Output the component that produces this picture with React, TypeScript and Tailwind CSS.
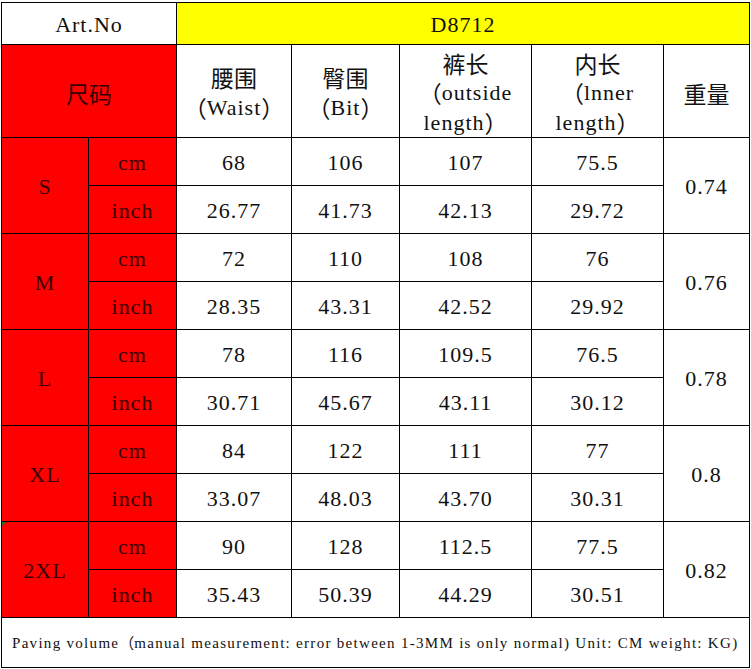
const sizes = [
  { size: "S", cm: ["68", "106", "107", "75.5"], inch: ["26.77", "41.73", "42.13", "29.72"], weight: "0.74" },
  { size: "M", cm: ["72", "110", "108", "76"], inch: ["28.35", "43.31", "42.52", "29.92"], weight: "0.76" },
  { size: "L", cm: ["78", "116", "109.5", "76.5"], inch: ["30.71", "45.67", "43.11", "30.12"], weight: "0.78" },
  { size: "XL", cm: ["84", "122", "111", "77"], inch: ["33.07", "48.03", "43.70", "30.31"], weight: "0.8" },
  { size: "2XL", cm: ["90", "128", "112.5", "77.5"], inch: ["35.43", "50.39", "44.29", "30.51"], weight: "0.82" },
]

function Cjk({ children }: { children: React.ReactNode }) {
  return <span className="font-['Noto_Sans_CJK_SC',sans-serif] text-[23px] tracking-normal">{children}</span>
}

// one line of a header cell, fixed height so mixed fonts don't push it around
function Line({ children }: { children: React.ReactNode }) {
  return <div className="flex h-[31px] items-center justify-center whitespace-nowrap">{children}</div>
}

const cell = "flex items-center justify-center text-center pt-[3px]"
const white = `${cell} bg-white text-[#111]`
const red = `${cell} bg-[#ff0000] text-[#3a0000]`

export default function App() {
  return (
    <div className="min-h-screen bg-white pt-[2px] pl-[1px] font-['Liberation_Serif','Noto_Sans_CJK_SC',serif] text-[22px] leading-[30px] tracking-[1px] [text-spacing-trim:space-all]">
      <div className="grid w-fit grid-cols-[86px_87px_114px_107px_131px_131px_85px] grid-rows-[41px_92px_repeat(10,47px)_49px] gap-px bg-black p-px">
        <div className={`${white} col-span-2`}>Art.No</div>
        <div className={`${cell} col-span-5 bg-[#ffff00] text-[#111]`}>D8712</div>

        <div className={`${red} col-span-2`}>
          <Cjk>尺码</Cjk>
        </div>
        <div className={`${white} flex-col`}>
          <Line><Cjk>腰围</Cjk></Line>
          <Line><Cjk>（</Cjk>Waist<Cjk>）</Cjk></Line>
        </div>
        <div className={`${white} flex-col`}>
          <Line><Cjk>臀围</Cjk></Line>
          <Line><Cjk>（</Cjk>Bit<Cjk>）</Cjk></Line>
        </div>
        <div className={`${white} flex-col`}>
          <Line><Cjk>裤长</Cjk></Line>
          <Line><Cjk>（</Cjk>outside</Line>
          <Line>length<Cjk>）</Cjk></Line>
        </div>
        <div className={`${white} flex-col`}>
          <Line><Cjk>内长</Cjk></Line>
          <Line><Cjk>（</Cjk>lnner</Line>
          <Line>length<Cjk>）</Cjk></Line>
        </div>
        <div className={white}>
          <Cjk>重量</Cjk>
        </div>

        {sizes.map((s) => (
          <div key={s.size} className="contents">
            <div className={`${red} relative row-span-2`}>
              {s.size === "2XL" && (
                <span className="absolute left-0 top-0 h-0 w-0 border-r-[4px] border-t-[4px] border-r-transparent border-t-[#1f7a1f]"></span>
              )}
              {s.size}
            </div>
            <div className={red}>cm</div>
            {s.cm.map((v, i) => (
              <div key={i} className={white}>{v}</div>
            ))}
            <div className={`${white} row-span-2`}>{s.weight}</div>
            <div className={red}>inch</div>
            {s.inch.map((v, i) => (
              <div key={i} className={white}>{v}</div>
            ))}
          </div>
        ))}

        <div className="col-span-7 flex items-center whitespace-nowrap bg-white pl-[10px] text-[15px] tracking-[1.3px] text-[#111]">
          Paving volume <span className="font-['Noto_Sans_CJK_SC',sans-serif] tracking-normal">（</span>manual measurement: error between 1-3MM is only normal) Unit: CM weight: KG)
        </div>
      </div>
    </div>
  )
}
